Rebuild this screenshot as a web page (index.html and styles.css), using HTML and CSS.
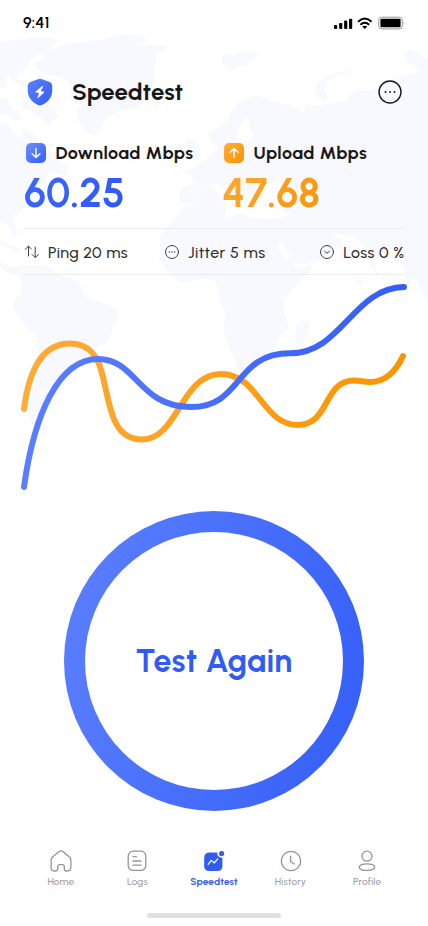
FILE: index.html
```html
<!DOCTYPE html>
<html lang="en">
<head>
<meta charset="utf-8">
<meta name="viewport" content="width=device-width, initial-scale=1">
<title>Speedtest</title>
<link rel="stylesheet" href="styles.css">
</head>
<body>
<div class="screen">
  <svg class="map" viewBox="0 0 1284 1500" aria-hidden="true">
    <path class="land" d="M0 126C30 118 60 122 90 115C120 110 160 112 176 124C165 140 150 142 150 150C162 150 180 134 210 130C260 128 300 118 340 112C360 104 390 100 410 106C430 108 450 118 444 124L398 130C400 136 430 134 460 135C490 136 506 138 502 146C490 152 462 160 468 172C478 182 464 192 462 206C470 224 464 232 458 252C458 270 446 282 440 296C420 322 400 328 370 330C346 336 318 354 306 374C304 392 290 410 278 402C256 398 240 380 236 362C228 346 230 324 244 318C252 308 238 300 214 294C206 280 216 270 210 254C196 236 176 224 150 226C128 222 104 208 104 190C112 180 134 182 136 172C130 162 112 162 102 170C88 184 80 200 70 214C56 220 44 228 56 240C76 246 98 248 98 262L70 262C56 250 40 246 32 232C20 222 16 232 20 250C20 264 8 264 0 262Z"/>
    <path class="land" d="M0 296C14 290 30 300 34 318C36 330 56 342 66 354C56 366 40 364 34 350C26 340 10 346 0 344ZM64 310C80 296 104 302 120 310C136 302 150 314 156 330C164 344 178 342 172 356C150 360 160 376 148 376C134 370 134 350 110 348C94 344 104 332 84 330C70 330 60 322 64 310ZM0 372C18 366 32 376 40 392C50 410 64 424 68 400C64 382 82 386 98 400C116 410 114 428 128 444C154 452 176 464 180 486C200 490 206 510 202 528C178 528 164 512 154 516C138 530 134 552 108 564C88 574 74 594 72 624C62 636 38 642 38 660C50 680 56 700 46 710C34 704 32 680 20 672L0 666ZM0 716C24 736 52 738 70 750L62 756C38 756 20 738 0 732Z"/>
    <path class="land" d="M0 784C20 798 30 802 48 800C66 790 88 798 112 796C140 794 160 806 176 826C194 830 210 836 232 842C250 858 242 880 262 892C290 904 326 910 348 928C364 946 348 966 340 978C334 1000 330 1020 310 1034C290 1046 272 1044 266 1064C254 1084 240 1098 228 1110C216 1130 200 1140 190 1156C176 1180 158 1188 146 1206C132 1230 122 1256 128 1272C144 1284 150 1286 134 1292C108 1290 88 1272 86 1240C90 1200 104 1150 110 1110C112 1070 118 1030 110 1002C84 992 70 970 60 950C46 936 34 920 42 906C54 894 64 884 66 862C64 834 54 820 38 822C20 820 10 806 0 800Z"/>
    <path class="land" d="M664 174C672 160 690 166 700 164C712 154 732 158 746 156L774 164C772 176 758 178 742 186C744 194 732 202 716 196C704 206 702 214 694 214C682 206 674 196 668 192Z"/>
    <path class="land" d="M946 276C940 252 962 236 988 226C1010 218 1034 212 1050 210C1054 218 1040 222 1022 224C1000 230 980 240 976 258C972 276 984 288 980 300C966 300 954 294 946 276ZM1214 168C1212 152 1228 146 1242 152C1256 166 1270 170 1284 176V906C1270 880 1260 858 1250 842C1240 826 1230 848 1224 860C1212 848 1224 818 1210 800C1198 770 1184 748 1170 744C1148 756 1130 780 1122 790C1118 804 1144 824 1136 830C1120 818 1112 790 1104 772C1098 736 1074 722 1060 710C1040 702 1020 708 1002 700C1010 718 1032 722 1024 742C1004 758 966 780 924 792C934 800 942 792 930 814C910 840 880 854 872 878C858 892 846 904 852 930C858 956 870 984 862 990C840 996 842 1010 832 1026C832 1048 818 1064 792 1082C770 1108 750 1124 720 1116C704 1096 706 1070 688 1048C670 1010 666 980 676 948C676 922 658 912 656 892C662 866 650 852 640 842C616 832 592 838 570 846C548 854 530 838 516 828C496 812 490 790 476 780C490 756 474 740 478 714C492 684 526 660 536 638C548 620 562 616 574 612C588 592 606 576 632 560C654 566 652 580 664 592C674 612 690 632 672 650C698 654 710 638 728 642C740 654 772 652 802 656C834 660 850 648 866 644C842 632 840 610 858 596C838 594 832 578 842 564C850 544 836 538 820 548C804 554 784 548 778 560C778 586 764 596 746 584C724 566 712 568 706 584C690 580 670 564 650 552C626 556 596 586 576 606C560 616 534 612 536 592C542 568 544 560 580 556C584 530 562 522 550 514C582 508 590 490 610 482C630 470 648 456 656 440C632 440 616 410 630 394C648 384 672 380 682 360C694 320 720 298 758 288C800 286 808 302 842 312C872 310 894 326 910 342C918 334 910 318 920 314C960 324 1000 302 1034 308C1048 282 1060 268 1084 270C1124 278 1140 250 1188 236C1220 226 1250 222 1254 210C1252 194 1220 190 1214 168ZM890 976C906 962 920 958 930 964C926 1000 916 1020 900 1044C880 1038 884 998 890 976ZM560 416C584 412 592 438 602 454C604 472 590 478 564 482C566 466 574 456 560 444ZM1060 826C1074 832 1086 840 1094 856C1080 860 1068 846 1060 826Z"/>
    <path class="water" d="M718 382C702 398 714 412 726 426C750 424 756 416 764 404C748 388 740 372 752 354C732 350 724 366 718 382ZM834 740C838 720 848 722 852 740C870 756 874 764 868 778C852 778 840 760 834 740ZM882 792C900 790 912 796 930 792C918 806 902 806 886 804ZM900 562C920 556 932 572 928 586C942 606 930 622 914 620C910 600 898 590 900 562Z"/>
  </svg>

  <header class="status">
    <time>9:41</time>
    <svg class="status-icons" viewBox="0 0 72 14" aria-hidden="true">
      <rect x="0" y="9" width="3.2" height="4" rx="1"/><rect x="5.1" y="7" width="3.2" height="6" rx="1"/><rect x="10.1" y="4.6" width="3.2" height="8.4" rx="1"/><rect x="15" y="2.8" width="3.2" height="10.2" rx="1"/>
      <path class="wifi" d="M24 5.7Q30.8-.7 37.6 5.7M26.4 8.7Q30.8 4.7 35.2 8.7"/>
      <path d="M28.2 10.6Q30.8 8.7 33.4 10.6L30.8 13Z"/>
      <rect class="battery-case" x="44.7" y="1.2" width="23.6" height="11.7" rx="3"/>
      <rect x="46.4" y="2.8" width="20.2" height="8.4" rx="1.2"/><path class="battery-tip" d="M69.6 5.4Q71.3 7 69.6 8.8Z"/>
    </svg>
  </header>

  <div class="titlebar">
    <svg class="shield" viewBox="0 0 26 28" aria-hidden="true">
      <defs><linearGradient id="blue" x1="0" x2="1" y1="0" y2="1"><stop stop-color="#5c80ff"/><stop offset="1" stop-color="#335ef7"/></linearGradient></defs>
      <path fill="url(#blue)" d="M11 1.2Q13 .3 15 1.2L22.7 4Q25.1 5 25.2 7.5V13C25.2 19.5 20.5 24.6 14.8 27.1Q13 27.9 11.2 27.1C5.5 24.6.8 19.5.8 13V7.5Q.9 5 3.3 4Z"/>
      <path fill="#fff" d="M15.4 8.1L8.3 13.7Q8.2 14.4 9 14.5L12.1 14.9L10.4 19.7Q10.5 20.4 11.2 20L17 14.6Q17.3 13.8 16.5 13.6L13.6 13.2L16 8.8Q16.1 8 15.4 8.1Z"/>
    </svg>
    <h1>Speedtest</h1>
    <svg class="more" viewBox="0 0 24 24" aria-hidden="true"><circle cx="12" cy="12" r="11"/><path d="M7.5 12h.01M12 12h.01M16.5 12h.01"/></svg>
  </div>

  <section class="speeds">
    <div class="speed download">
      <div class="speed-label"><span class="tile"><svg viewBox="0 0 20 20"><path d="M10 5.5v9M6.1 10.7L10 14.6l3.9-3.9"/></svg></span><span class="label-text">Download Mbps</span></div>
      <strong>60.25</strong>
    </div>
    <div class="speed upload">
      <div class="speed-label"><span class="tile"><svg viewBox="0 0 20 20"><path d="M10 14.5v-9M6.1 9.3L10 5.4l3.9 3.9"/></svg></span><span class="label-text">Upload Mbps</span></div>
      <strong>47.68</strong>
    </div>
  </section>

  <section class="stats">
    <div class="stat ping"><svg viewBox="0 0 16 16"><path d="M4.5 12V2.5M1.2 5.3L4.5 2.2l2.8 2.6M11.2 3v10.4M8.2 10.6l3 3 3.4-3.2"/></svg><span>Ping 20 ms</span></div>
    <div class="stat jitter"><svg viewBox="0 0 16 16"><circle cx="8" cy="8" r="6.5"/><path class="dots" d="M5.4 8h.01M8 8h.01M10.6 8h.01"/></svg><span>Jitter 5 ms</span></div>
    <div class="stat loss"><svg viewBox="0 0 16 16"><circle cx="8" cy="8" r="6.5"/><path d="M5.6 7.2L8 9.3l2.4-2.1"/></svg><span>Loss 0 %</span></div>
  </section>

  <svg class="chart" viewBox="0 275 428 225" role="img" aria-label="Speed chart">
    <defs>
      <linearGradient id="lineBlue" gradientUnits="userSpaceOnUse" x1="24" x2="404" y1="380" y2="400"><stop stop-color="#5b7fff"/><stop offset="1" stop-color="#335ef7"/></linearGradient>
      <linearGradient id="lineOrange" gradientUnits="userSpaceOnUse" x1="24" x2="404" y1="380" y2="400"><stop stop-color="#ffab38"/><stop offset="1" stop-color="#fb9400"/></linearGradient>
    </defs>
    <path stroke="url(#lineOrange)" d="M24 409C29 370 43 343.5 70 343.5C89 343.5 97.5 357 101 370C110 399 109 439.5 142 439.5C178 439.5 181 374 221 374C259 374 262 425 298 425C330 425 323 380.5 354 380.5C361 380.5 363 382 370 382C386 382 396 371 403 356"/>
    <path stroke="url(#lineBlue)" d="M24 487C34 414 59 359 98 359C137 359 138 407 191 407C243 407 234 353.3 290 353.3C342 353.3 353 288 404 287"/>
  </svg>

  <button class="test"><span>Test Again</span></button>

  <nav class="tabs">
    <a class="tab"><svg viewBox="0 0 24 24"><path d="M8.7 19.2V17.6Q8.7 15.7 10.6 15.7H13.4Q15.3 15.7 15.3 17.6V20.2Q15.3 22 17.1 22H18.5Q21.9 22 21.9 18.6V11.4Q21.9 9.4 20.4 8.1L14.2 2.8Q12 .9 9.8 2.8L3.6 8.1Q2.1 9.4 2.1 11.4V18.6Q2.1 22 5.5 22H6.9Q8.7 22 8.7 20.2Z"/></svg><span>Home</span></a>
    <a class="tab"><svg viewBox="0 0 24 24"><rect x="3.2" y="2.2" width="17.6" height="19.2" rx="5"/><path d="M8 7.6h3.4M8 12h8M8 16.2h8"/></svg><span>Logs</span></a>
    <a class="tab active"><svg viewBox="0 0 24 24"><path class="solid" d="M8 3.6H15.3C15 7 17.2 8.9 20.4 8.7V17Q20.4 22 15.4 22H7.2Q2.2 22 2.2 17V9Q2.2 3.6 8 3.6Z"/><circle class="solid" cx="19.6" cy="4.5" r="2.6"/><path class="trend" d="M6.2 15.3L9.2 11.4L12.4 13.9L15.7 9.8"/></svg><span>Speedtest</span></a>
    <a class="tab"><svg viewBox="0 0 24 24"><circle cx="12" cy="12" r="9.7"/><path d="M11.6 7.2V12.7L15.5 15"/></svg><span>History</span></a>
    <a class="tab"><svg viewBox="0 0 24 24"><circle cx="12" cy="7.2" r="5"/><path d="M4.3 18.3C4.3 15.7 7.8 14.8 12 14.8S19.7 15.7 19.7 18.3S16.2 21.4 12 21.4S4.3 20.8 4.3 18.3Z"/></svg><span>Profile</span></a>
  </nav>
  <div class="home-indicator"></div>
</div>
</body>
</html>
```
FILE: styles.css
```css
* { box-sizing: border-box; }
body { margin: 0; background: #fff; font-family: Urbanist, Lato, sans-serif; color: #181818; }
svg { display: block; flex: none; }
.screen { position: relative; isolation: isolate; width: 428px; height: 926px; overflow: hidden; display: flex; flex-direction: column; }
.map { position: absolute; z-index: -1; left: 0; top: 0; width: 428px; height: 500px; }
.land { fill: #f8f9ff; }
.water { fill: #fff; }

.status { height: 46px; padding: 0 22px 0 23px; display: flex; align-items: center; justify-content: space-between; }
.status time { font-size: 16px; line-height: 20px; font-weight: 600; letter-spacing: 0.1px; color: #000; margin-top: -1px; }
.status-icons { width: 72px; height: 14px; }
.wifi { fill: none; stroke: #000; stroke-width: 2; }
.battery-case { fill: none; stroke: #999; stroke-width: 1; }
.battery-tip { fill: #999; }

.titlebar { height: 92px; padding: 0 26px 0 27px; display: flex; align-items: center; }
.shield { width: 26px; height: 28px; }
.titlebar h1 { flex: 1; margin: 0 0 0 19px; font-size: 24px; line-height: 30px; font-weight: 700; letter-spacing: 0; }
.more { width: 24px; height: 24px; fill: none; stroke: #181818; stroke-width: 1.4; stroke-linecap: round; }
.more path { stroke-width: 1.9; }

.speeds { display: grid; grid-template-columns: 198px 1fr; height: 90px; margin: 0 24px; }
.speed-label { height: 30px; padding-left: 2px; display: flex; align-items: center; gap: 9.5px; }
.label-text { font-size: 18px; font-weight: 700; letter-spacing: 0.38px; white-space: nowrap; }
.tile { width: 20px; height: 20px; border-radius: 5px; flex: none; }
.tile svg { width: 20px; height: 20px; fill: none; stroke: #fff; stroke-width: 1.4; stroke-linecap: round; stroke-linejoin: round; }
.download .tile { background: linear-gradient(135deg, #6f8fff, #335ef7); }
.upload .tile { background: linear-gradient(135deg, #ffad3b, #fb9400); }
.speed strong { display: block; width: max-content; font-size: 40px; line-height: 51px; font-weight: 700; color: transparent; background-clip: text; -webkit-background-clip: text; }
.download strong { background-image: linear-gradient(135deg, #4069fa, #2a58f5); }
.upload strong { background-image: linear-gradient(135deg, #ffab38, #fb9400); }

.stats { height: 47px; margin: 0 24px; padding-top: 1px; border: solid #ececef; border-width: 1px 0; display: grid; grid-template-columns: 140px 1fr auto; align-items: center; }
.stat { display: flex; align-items: center; gap: 8px; font-size: 16px; line-height: 22px; font-weight: 500; letter-spacing: 0.38px; color: #303030; white-space: nowrap; }
.stat span { padding-top: 1px; }
.loss { margin-right: -0.4px; }
.stat svg { width: 16px; height: 16px; fill: none; stroke: #424242; stroke-width: 1; stroke-linecap: round; stroke-linejoin: round; }
.stat .dots { stroke-width: 1.4; }

.chart { width: 428px; height: 225px; fill: none; stroke-width: 6; stroke-linecap: round; }
.test { width: 300px; height: 300px; margin: 11px auto 0; padding: 21px; flex: none; border: 0; border-radius: 50%; background: linear-gradient(105deg, #5c80ff, #335ef7); font: 700 32px/40px Urbanist, Lato, sans-serif; letter-spacing: 0.3px; color: #315bf5; }
.test span { width: 258px; height: 258px; border-radius: 50%; background: #fff; display: flex; align-items: center; justify-content: center; }

.tabs { height: 78px; margin: 38px 22px 0; display: grid; grid-template-columns: repeat(5, 76.6px); justify-content: center; align-items: start; }
.tab { display: flex; flex-direction: column; align-items: center; color: #9e9e9e; font-size: 10px; line-height: 16px; font-weight: 500; letter-spacing: 0.15px; gap: 1px; }
.tab svg { width: 24px; height: 24px; fill: none; stroke: #959595; stroke-width: 1.3; stroke-linecap: round; stroke-linejoin: round; }
.tab.active { color: #315bf5; font-weight: 700; }
.tab .solid { fill: #315bf5; stroke: none; }
.tab .trend { stroke: #fff; }
.home-indicator { width: 134px; height: 5px; margin: -14px auto 0; border-radius: 3px; background: #e0e0e0; }
```
